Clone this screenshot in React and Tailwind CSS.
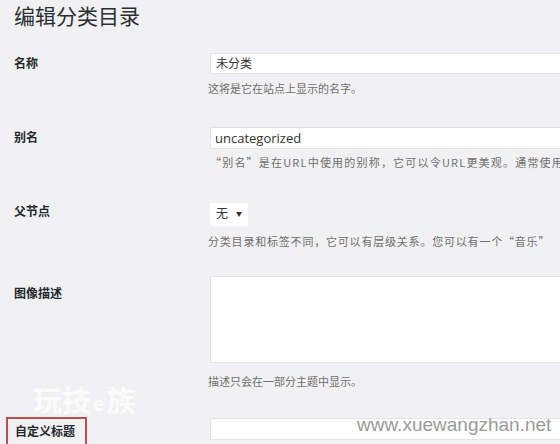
export default function App() {
  const base = { fontFamily: '"Open Sans", "Noto Sans CJK SC", sans-serif' };
  const cjk = { fontFamily: '"Noto Sans CJK SC", "Open Sans", sans-serif' };

  return (
    <div
      className="relative w-[560px] h-[444px] overflow-hidden bg-[#f1f1f3] text-[#23282d]"
      style={base}
    >
      {/* Heading */}
      <h1 className="pl-[14px] pt-[2px] text-[21px] leading-[28px] font-normal text-[#2b2f33]">
        编辑分类目录
      </h1>

      {/* 名称 */}
      <div className="flex mt-[23px]">
        <div className="w-[210px] shrink-0 pl-[14px] text-[12px] font-bold leading-[21px]">名称</div>
        <div className="flex-1 min-w-0">
          <div className="w-[400px] h-[21px] bg-white border border-[#e4e4e6] pl-[5px] text-[12px] leading-[19px] text-[#333]">
            未分类
          </div>
          <p className="mt-[6px] text-[11px] leading-[16px] text-[#6f6f6f] -ml-[2px]" style={cjk}>
            这将是它在站点上显示的名字。
          </p>
        </div>
      </div>

      {/* 别名 */}
      <div className="flex mt-[31px]">
        <div className="w-[210px] shrink-0 pl-[14px] text-[12px] font-bold leading-[21px]">别名</div>
        <div className="flex-1 min-w-0">
          <div className="w-[400px] h-[22px] bg-white border border-[#e4e4e6] pl-[4px] text-[13px] leading-[20px] text-[#333]">
            uncategorized
          </div>
          <p className="mt-[5px] text-[11px] leading-[16px] tracking-[1.2px] text-[#6f6f6f] whitespace-nowrap" style={cjk}>
            “别名”是在URL中使用的别称，它可以令URL更美观。通常使用
          </p>
        </div>
      </div>

      {/* 父节点 */}
      <div className="flex mt-[30px]">
        <div className="w-[210px] shrink-0 pl-[14px] text-[12px] font-bold leading-[23px]">父节点</div>
        <div className="flex-1 min-w-0">
          <div className="inline-flex items-center gap-[8px] h-[23px] bg-white pl-[6px] pr-[6px] text-[12px] text-[#333]">
            <span>无</span>
            <span className="text-[6px]">▼</span>
          </div>
          <p className="mt-[7px] text-[11px] leading-[16px] tracking-[0.8px] text-[#6f6f6f] -ml-[2px] whitespace-nowrap" style={cjk}>
            分类目录和标签不同，它可以有层级关系。您可以有一个“音乐”
          </p>
        </div>
      </div>

      {/* 图像描述 */}
      <div className="flex mt-[27px]">
        <div className="w-[210px] shrink-0 pl-[14px] pt-[7px] text-[12px] font-bold leading-[21px]">图像描述</div>
        <div className="flex-1 min-w-0">
          <div className="w-[400px] h-[87px] bg-white border border-[#e4e4e6]" />
          <p className="mt-[10px] text-[11px] leading-[16px] text-[#6f6f6f] -ml-[2px]" style={cjk}>
            描述只会在一部分主题中显示。
          </p>
        </div>
      </div>

      {/* 自定义标题 */}
      <div className="flex mt-[29px]">
        <div className="w-[210px] shrink-0 pl-[6px]">
          <div className="-mt-[2px] inline-block border-2 border-[#b8514d] pl-[7px] pr-[10px] text-[12px] font-bold leading-[25px]">
            自定义标题
          </div>
        </div>
        <div className="flex-1 min-w-0">
          <div className="w-[400px] h-[22px] bg-white border border-[#e4e4e6]" />
        </div>
      </div>

      {/* Watermarks */}
      <div
        className="absolute left-[33px] top-[385px] flex items-end text-white/75 font-semibold leading-none"
        style={cjk}
      >
        <span className="text-[29px]">玩技</span>
        <span className="text-[20px] mb-[1px] mx-[2px]">e</span>
        <span className="text-[29px]">族</span>
      </div>
      <div
        className="absolute left-[357px] top-[413px] text-[19px] leading-[24px] text-[#9a9a9a]"
        style={{ fontFamily: '"Liberation Sans", sans-serif' }}
      >
        www.xuewangzhan.net
      </div>
    </div>
  );
}
